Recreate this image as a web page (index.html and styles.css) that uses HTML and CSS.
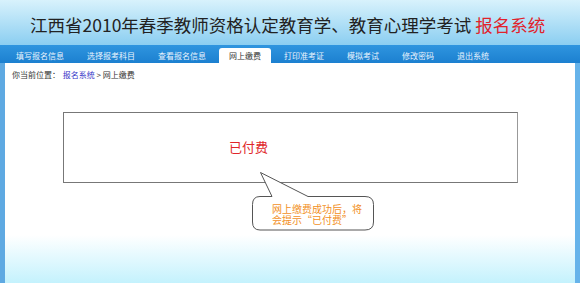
FILE: index.html
```html
<!DOCTYPE html>
<html lang="zh-CN">

<head>
    <meta charset="UTF-8">
    <title>报名系统 - 网上缴费</title>
    <link rel="stylesheet" href="styles.css">
</head>

<body>
    <div class="top">
        <h1>江西省2010年春季教师资格认定教育学、教育心理学考试 <span>报名系统</span></h1>
    </div>
    <ul class="nav">
        <li>填写报名信息</li>
        <li>选择报考科目</li>
        <li>查看报名信息</li>
        <li class="active">网上缴费</li>
        <li>打印准考证</li>
        <li>模拟考试</li>
        <li>修改密码</li>
        <li>退出系统</li>
    </ul>
    <div class="main">
        <div class="crumb">你当前位置： <a href="#">报名系统</a> &gt; 网上缴费</div>
        <div class="panel">
            <p>已付费</p>
        </div>
        <div class="tip">
            <svg width="126" height="62" viewBox="0 0 126 62">
                <path d="M10.5,2.5 L58,26.5 H115 Q123.5,26.5 123.5,34.5 V52 Q123.5,60 115,60 H10 Q2.5,60 2.5,52 V34.5 Q2.5,26.5 10,26.5 H22 Z"
                    fill="#fff" stroke="#555" stroke-width="1" stroke-linejoin="round" />
            </svg>
            <p>网上缴费成功后，将会提示“已付费”</p>
        </div>
    </div>
</body>

</html>
```

FILE: styles.css
```css
html, body {
    margin: 0;
    padding: 0;
    width: 580px;
    height: 283px;
    overflow: hidden;
    font-family: "Noto Sans CJK SC", "Liberation Sans", sans-serif;
}

.top {
    height: 45px;
    background: linear-gradient(#d8f2fc, #8bcef1);
    box-sizing: border-box;
    padding: 12px 0 0 30px;
}

.top h1 {
    margin: 0;
    font-size: 17.5px;
    font-weight: normal;
    line-height: 25px;
    color: #222;
    white-space: nowrap;
}

.top h1 span {
    color: #e1222b;
}

.nav {
    display: flex;
    align-items: flex-end;
    gap: 3px;
    height: 18px;
    margin: 0;
    padding: 0 0 0 6px;
    list-style: none;
    background: linear-gradient(#2f95df, #1c80d0);
    box-sizing: border-box;
}

.nav li {
    padding: 0 10px;
    font-size: 8px;
    line-height: 15px;
    color: #e8f3fd;
    white-space: nowrap;
}

.nav li.active {
    background: #fff;
    color: #333;
    border-radius: 3px 3px 0 0;
}

.main {
    position: relative;
    height: 220px;
    border-left: 5px solid #5ea9e2;
    border-right: 5px solid #66b3ea;
    background: linear-gradient(#fff 172px, #c4f2fd);
}

.crumb {
    padding: 6px 0 0 7px;
    font-size: 8px;
    line-height: 12px;
    color: #333;
}

.crumb a {
    color: #3535c8;
    text-decoration: none;
    margin-left: 1px;
}

.panel {
    width: 453px;
    height: 69px;
    margin: 31px 0 0 58px;
    border: 1px solid #777;
    border-right-color: #999;
}

.panel p {
    margin: 0;
    padding-left: 165px;
    font-size: 13px;
    line-height: 67px;
    color: #e0262a;
}

.tip {
    position: absolute;
    left: 245px;
    top: 107px;
    width: 126px;
    height: 62px;
}

.tip svg {
    display: block;
}

.tip p {
    position: absolute;
    left: 22px;
    top: 33px;
    width: 92px;
    margin: 0;
    font-size: 10px;
    line-height: 11px;
    color: #f2901e;
}
```
